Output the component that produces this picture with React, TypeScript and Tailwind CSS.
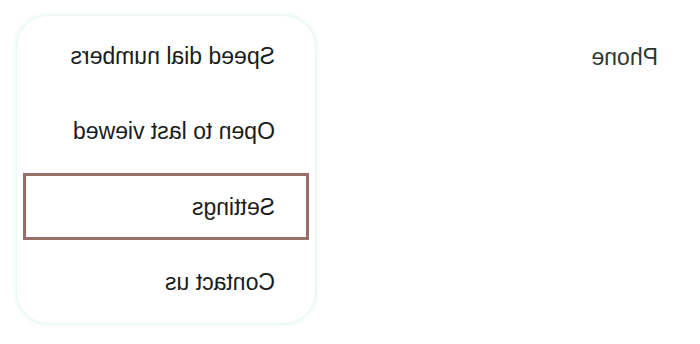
import { useState } from 'react';

const items = ['Speed dial numbers', 'Open to last viewed', 'Settings', 'Contact us'];

export default function App() {
  const [selected, setSelected] = useState<number>(2);

  return (
    <div
      className="w-[700px] h-[344px] bg-white flex items-start -scale-x-100 overflow-hidden"
      style={{ fontFamily: '"Liberation Sans", Arial, sans-serif' }}
    >
      <p className="pl-[42px] pt-[43px] text-[23px] leading-[28px] text-[#2e3833]">Phone</p>

      <div className="ml-auto mr-[16px] mt-[15px] w-[300px] rounded-[32px] border border-[#e8f8f5] bg-white pt-[2px] pb-[3px] shadow-[0_0_4px_rgba(200,240,232,0.6)]">
        {items.map((item, index) => (
          <div key={index} className="h-[75.5px] flex items-center" onClick={() => setSelected(index)}>
            <div
              className={
                index === selected
                  ? 'mx-[6px] h-[67px] w-full flex items-center pl-[31px] border-[3px] border-[#967068]'
                  : 'mx-[6px] h-[67px] w-full flex items-center pl-[34px]'
              }
            >
              <span className="text-[23px] leading-[28px] text-[#1a1c1b]">{item}</span>
            </div>
          </div>
        ))}
      </div>
    </div>
  );
}
